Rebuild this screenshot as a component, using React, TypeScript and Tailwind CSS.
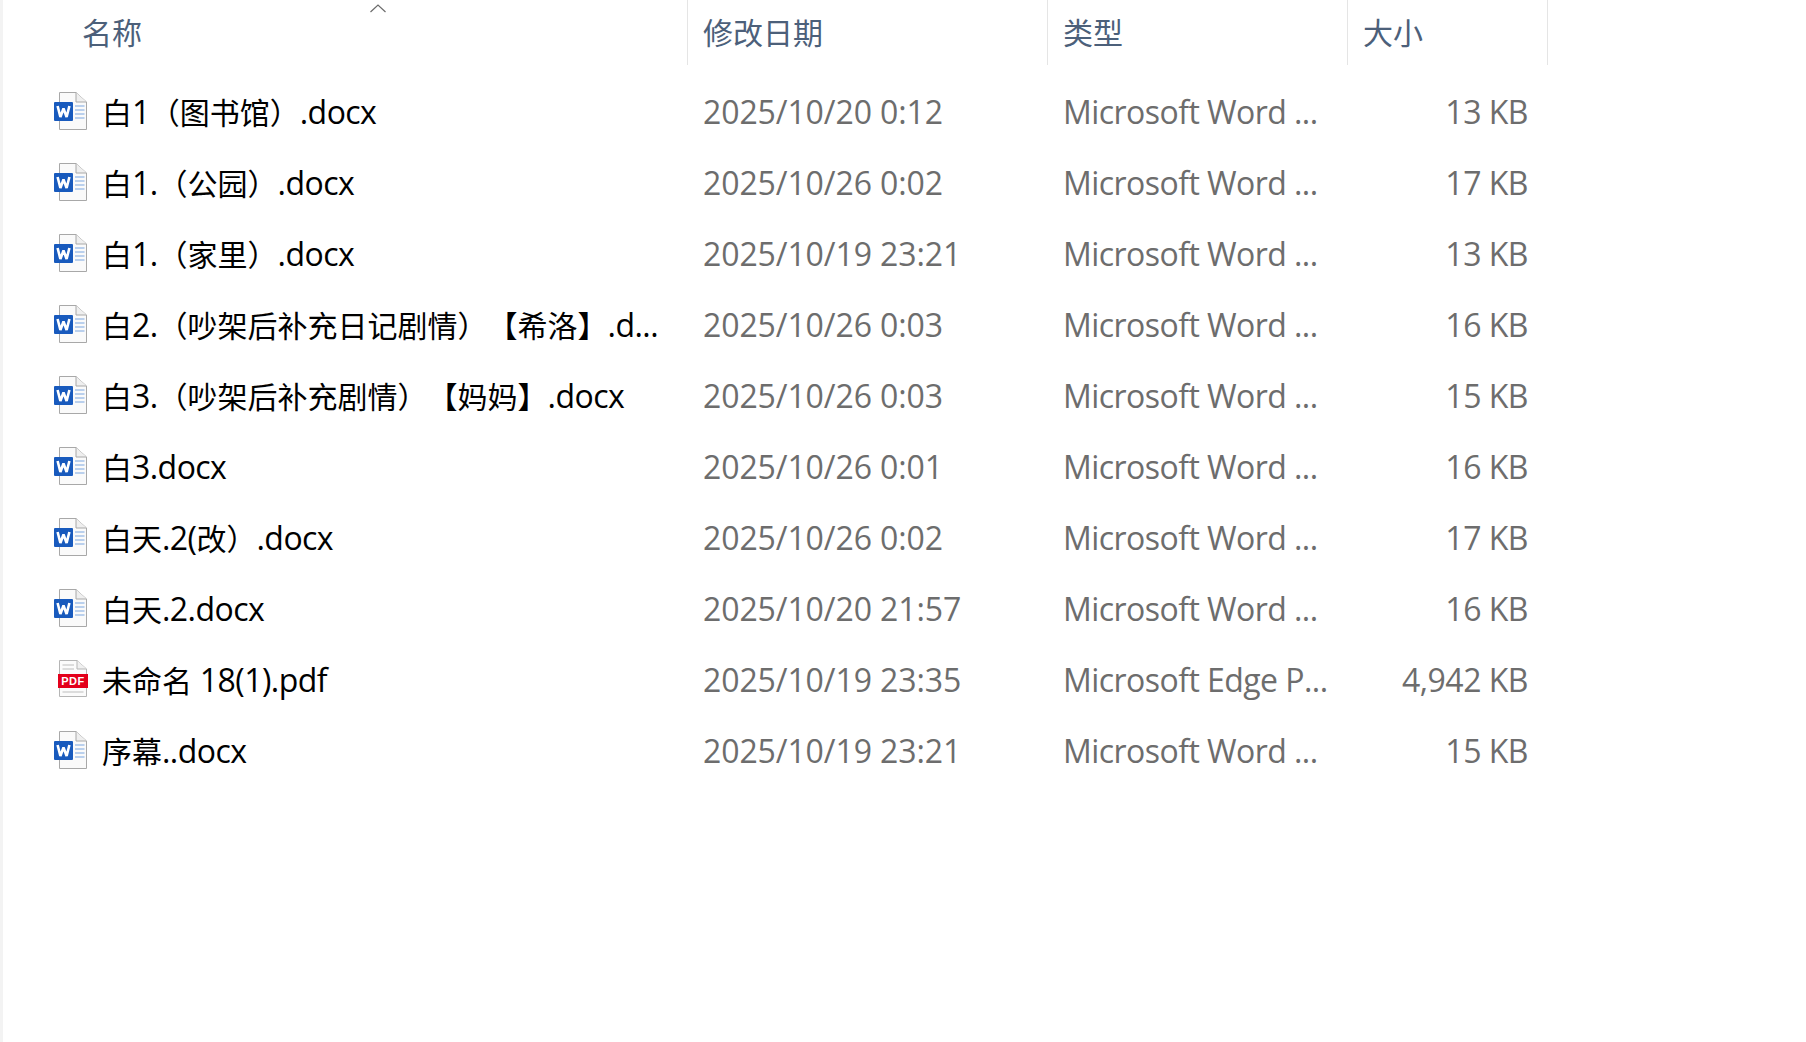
const FONT = "font-['Open_Sans','Noto_Sans_CJK_SC',sans-serif]"

type FileRow = { name: string; date: string; type: string; size: string; pdf?: boolean }

const files: FileRow[] = [
  { name: '白1（图书馆）.docx', date: '2025/10/20 0:12', type: 'Microsoft Word ...', size: '13 KB' },
  { name: '白1.（公园）.docx', date: '2025/10/26 0:02', type: 'Microsoft Word ...', size: '17 KB' },
  { name: '白1.（家里）.docx', date: '2025/10/19 23:21', type: 'Microsoft Word ...', size: '13 KB' },
  { name: '白2.（吵架后补充日记剧情）【希洛】.d...', date: '2025/10/26 0:03', type: 'Microsoft Word ...', size: '16 KB' },
  { name: '白3.（吵架后补充剧情）【妈妈】.docx', date: '2025/10/26 0:03', type: 'Microsoft Word ...', size: '15 KB' },
  { name: '白3.docx', date: '2025/10/26 0:01', type: 'Microsoft Word ...', size: '16 KB' },
  { name: '白天.2(改）.docx', date: '2025/10/26 0:02', type: 'Microsoft Word ...', size: '17 KB' },
  { name: '白天.2.docx', date: '2025/10/20 21:57', type: 'Microsoft Word ...', size: '16 KB' },
  { name: '未命名 18(1).pdf', date: '2025/10/19 23:35', type: 'Microsoft Edge P...', size: '4,942 KB', pdf: true },
  { name: '序幕..docx', date: '2025/10/19 23:21', type: 'Microsoft Word ...', size: '15 KB' },
]

// Chinese runs are set a little smaller than the latin text around them
function FileName({ name }: { name: string }) {
  const parts = name.split(/([^\x00-\x7f]+)/).filter(Boolean)
  return (
    <span className="ml-[14px] text-black whitespace-nowrap [text-spacing-trim:space-all]">
      {parts.map((p, i) =>
        /[^\x00-\x7f]/.test(p) ? (
          <span key={i} className="text-[30px]">{p}</span>
        ) : (
          <span key={i} className="tracking-[-0.55px]">{p}</span>
        ),
      )}
    </span>
  )
}

function WordIcon() {
  return (
    <svg width="34" height="38" viewBox="0 0 34 38" className="shrink-0 mb-[1px]">
      <path d="M5.5 0.5 H22 L32.5 10 V37.5 H5.5 Z" fill="#fafafa" stroke="#a8a8a8" strokeWidth="1" />
      <path d="M22 0.5 V10 H32.5" fill="#efefef" stroke="#a8a8a8" strokeWidth="1" />
      <rect x="0" y="10" width="19" height="19" fill="#185abd" rx="1" />
      <path d="M3.6 14 L6.4 25 L9.5 16.5 L12.6 25 L15.4 14" fill="none" stroke="#fff" strokeWidth="2.6" strokeLinejoin="bevel" />
      <path d="M21 14 H30.5 M21 18 H30.5 M21 22 H30.5 M21 26 H30.5" stroke="#7aa5e0" strokeWidth="1.2" />
    </svg>
  )
}

function PdfIcon() {
  return (
    <svg width="34" height="38" viewBox="0 0 34 38" className="shrink-0 mb-[1px]">
      <path d="M5.5 0.5 H23 L32.5 9 V36.5 H5.5 Z" fill="#fbfbfb" stroke="#b5b5b5" strokeWidth="1" />
      <path d="M23 0.5 V9 H32.5" fill="#f0f0f0" stroke="#b5b5b5" strokeWidth="1" />
      <path d="M8.5 5 H20 M8.5 9 H20 M8.5 32 H29.5" stroke="#bdbdbd" strokeWidth="1.2" />
      <rect x="4" y="14" width="30" height="14" fill="#e3001b" />
      <text x="19" y="25" textAnchor="middle" fontSize="11" fontWeight="700" fill="#fff" fontFamily="'Liberation Sans', sans-serif" letterSpacing="0.5">PDF</text>
    </svg>
  )
}

function HeaderCell({ label, className }: { label: string; className: string }) {
  return (
    <div className={`h-[65px] flex items-center text-[30px] text-[#4c607a] border-r border-[#e5e5e5] ${className}`}>
      {label}
    </div>
  )
}

export default function App() {
  return (
    <div className={`w-[1806px] h-[1042px] bg-white border-l-[3px] border-[#f3f3f3] overflow-hidden ${FONT}`}>
      {/* Header */}
      <div className="flex">
        <div className="relative w-[685px] h-[65px] flex items-center pl-[79px] text-[30px] text-[#4c607a] border-r border-[#e5e5e5]">
          名称
          <svg width="16" height="9" viewBox="0 0 16 9" className="absolute left-[367px] top-[4px]">
            <path d="M0.5 8 L8 1 L15.5 8" fill="none" stroke="#6b6b6b" strokeWidth="1.2" />
          </svg>
        </div>
        <HeaderCell label="修改日期" className="w-[360px] pl-[15px]" />
        <HeaderCell label="类型" className="w-[300px] pl-[15px]" />
        <HeaderCell label="大小" className="w-[200px] pl-[15px]" />
      </div>

      {/* Rows */}
      <div className="pt-[11px]">
        {files.map((f) => (
          <div key={f.name} className="flex h-[71px] items-center text-[32px]">
            <div className="w-[685px] flex items-center pl-[51px] shrink-0">
              {f.pdf ? <PdfIcon /> : <WordIcon />}
              <FileName name={f.name} />
            </div>
            <div className="w-[360px] pl-[15px] shrink-0 text-[#6d6d6d] whitespace-nowrap tracking-[-0.1px]">{f.date}</div>
            <div className="w-[300px] pl-[15px] shrink-0 text-[#6d6d6d] whitespace-nowrap tracking-[-0.55px]">{f.type}</div>
            <div className="w-[180px] shrink-0 text-right text-[#6d6d6d] whitespace-nowrap tracking-[-0.5px]">{f.size}</div>
          </div>
        ))}
      </div>
    </div>
  )
}
